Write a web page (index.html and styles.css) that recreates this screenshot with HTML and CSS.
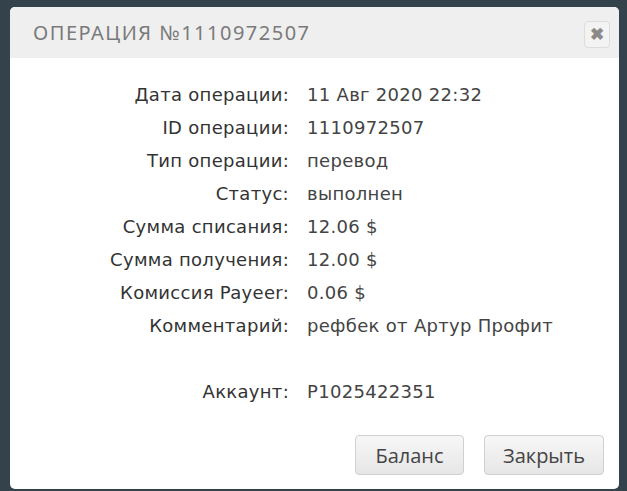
FILE: index.html
```html
<!DOCTYPE html>
<html lang="ru">
<head>
    <meta charset="UTF-8">
    <meta name="viewport" content="width=device-width, initial-scale=1.0">
    <title>Операция</title>
    <link rel="stylesheet" href="styles.css">
</head>
<body>
    <div class="modal">
        <div class="modal-header">
            <h3 class="modal-title">Операция №1110972507</h3>
            <button class="close" type="button">&#10006;</button>
        </div>
        <div class="modal-body">
            <div class="info">
                <div class="label">Дата операции:</div>
                <div class="value">11 Авг 2020 22:32</div>
                <div class="label">ID операции:</div>
                <div class="value">1110972507</div>
                <div class="label">Тип операции:</div>
                <div class="value">перевод</div>
                <div class="label">Статус:</div>
                <div class="value">выполнен</div>
                <div class="label">Сумма списания:</div>
                <div class="value">12.06 $</div>
                <div class="label">Сумма получения:</div>
                <div class="value">12.00 $</div>
                <div class="label">Комиссия Payeer:</div>
                <div class="value">0.06 $</div>
                <div class="label">Комментарий:</div>
                <div class="value">рефбек от Артур Профит</div>
                <div class="label"></div>
                <div class="value"></div>
                <div class="label">Аккаунт:</div>
                <div class="value">P1025422351</div>
            </div>
        </div>
        <div class="modal-footer">
            <button class="btn btn-balance">Баланс</button>
            <button class="btn btn-close">Закрыть</button>
        </div>
    </div>
</body>
</html>
```

FILE: styles.css
```css
* {
    margin: 0;
    padding: 0;
    box-sizing: border-box;
}

body {
    background-color: #33424b;
    font-family: 'DejaVu Sans', sans-serif;
    padding: 7px 8px 2px 10px;
    height: 100vh;
}

.modal {
    background: #fff;
    border-radius: 5px;
    overflow: hidden;
    height: 482px;
    display: flex;
    flex-direction: column;
}

.modal-header {
    background: #efefef;
    height: 51px;
    display: flex;
    align-items: center;
    justify-content: space-between;
    padding: 0 9px 0 23px;
}

.modal-title {
    font-family: 'Noto Sans', sans-serif;
    font-weight: normal;
    text-transform: uppercase;
    color: #7a7a7a;
    font-size: 20px;
    letter-spacing: 1.5px;
}

.close {
    width: 26px;
    height: 27px;
    border: 1px solid #dcdcdc;
    border-radius: 4px;
    background: #f3f3f3;
    color: #8a8a8a;
    font-size: 17px;
    font-weight: bold;
    line-height: 25px;
    text-align: center;
    margin-top: 4px;
    cursor: pointer;
}

.modal-body {
    padding-top: 20px;
}

.info {
    display: grid;
    grid-template-columns: 279px 1fr;
    grid-auto-rows: 33px;
    column-gap: 18px;
    align-items: center;
    font-size: 18px;
    letter-spacing: 0.3px;
}

.label {
    text-align: right;
    color: #333;
}

.value {
    color: #444;
}

.modal-footer {
    margin-top: auto;
    display: flex;
    justify-content: flex-end;
    gap: 20px;
    padding: 0 15px 14px 0;
}

.btn {
    height: 40px;
    border: 1px solid #d0d0d0;
    border-radius: 4px;
    background: linear-gradient(#f7f7f7, #e6e6e6);
    color: #444;
    font-family: 'Open Sans', sans-serif;
    font-size: 20px;
    cursor: pointer;
}

.btn-balance {
    width: 109px;
}

.btn-close {
    width: 120px;
}
```
